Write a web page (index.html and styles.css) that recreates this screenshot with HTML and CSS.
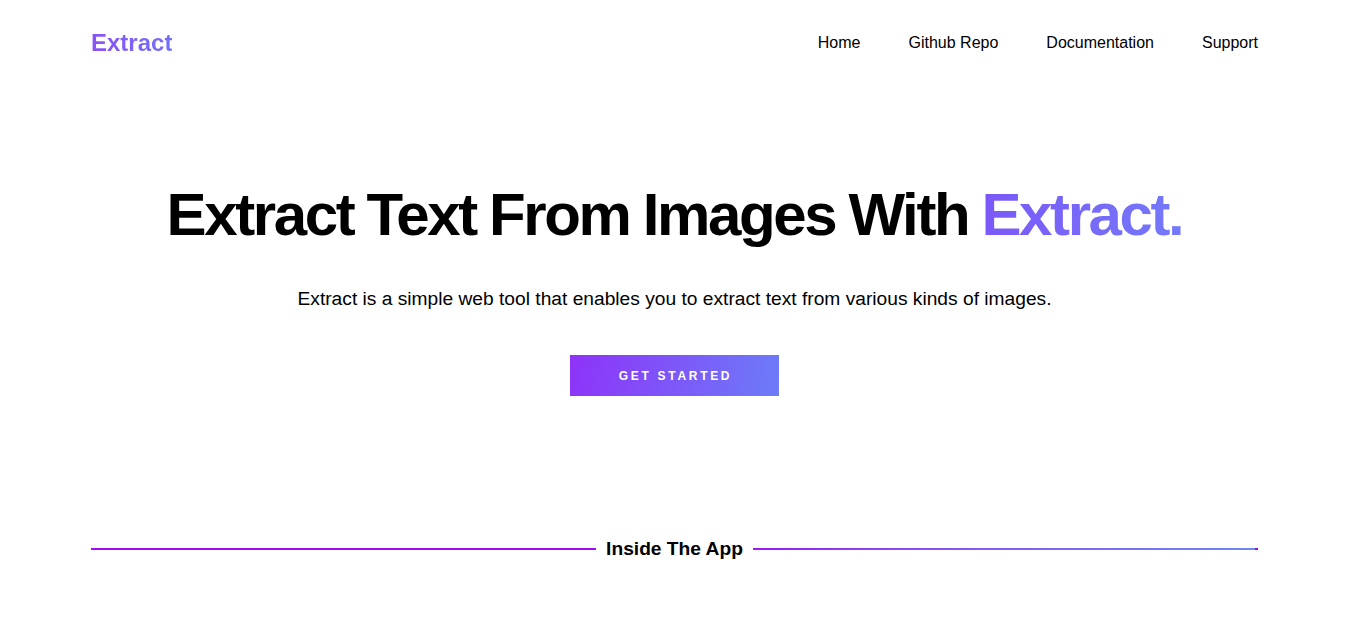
FILE: index.html
```html
<!DOCTYPE html>
<html lang="en">
<head>
<meta charset="utf-8">
<title>Extract</title>
<link rel="stylesheet" href="styles.css">
</head>
<body>
<div class="page">
  <header class="nav">
    <a class="logo" href="#">Extract</a>
    <nav class="links">
      <a href="#">Home</a>
      <a href="#">Github Repo</a>
      <a href="#">Documentation</a>
      <a href="#">Support</a>
    </nav>
  </header>
  <section class="hero">
    <h1 class="title">Extract Text From Images With <span class="grad">Extract.</span></h1>
    <p class="lead">Extract is a simple web tool that enables you to extract text from various kinds of images.</p>
    <a class="cta" href="#">GET STARTED</a>
  </section>
  <div class="divider">
    <span class="line left"></span>
    <h2 class="divider-title">Inside The App</h2>
    <span class="line right"></span>
  </div>
</div>
</body>
</html>
```
FILE: styles.css
```css
* { box-sizing: border-box; }
html, body { margin: 0; padding: 0; background: #fff; }
body { font-family: "Liberation Sans", Arial, sans-serif; color: #000; }
a { text-decoration: none; color: inherit; }

.page { padding: 0 91px; }

.nav {
  height: 86px;
  display: flex;
  align-items: center;
  justify-content: space-between;
}
.logo {
  font-size: 24px;
  font-weight: 700;
  background: linear-gradient(90deg, #8a52f6, #7370f9);
  -webkit-background-clip: text;
  background-clip: text;
  color: transparent;
}
.links { display: flex; gap: 48px; font-size: 16px; }

.hero {
  display: flex;
  flex-direction: column;
  align-items: center;
  padding-top: 94px;
}
.title {
  margin: 0;
  font-size: 60px;
  font-weight: 700;
  letter-spacing: -2.4px;
  word-spacing: -1px;
  line-height: 70px;
}
.grad {
  background: linear-gradient(90deg, #7b58f8, #7479fa);
  -webkit-background-clip: text;
  background-clip: text;
  color: transparent;
}
.lead {
  margin: 37px 0 0;
  font-size: 19.2px;
  line-height: 24px;
}
.cta {
  margin-top: 44px;
  width: 209px;
  height: 41px;
  display: flex;
  align-items: center;
  justify-content: center;
  color: #fff;
  font-size: 12px;
  font-weight: 700;
  letter-spacing: 2.7px;
  padding-left: 2px;
  background: linear-gradient(100deg, #8e33f8, #6c7cf8);
}

.divider {
  margin-top: 141px;
  display: flex;
  align-items: center;
  gap: 10px;
}
.line { flex: 1; height: 2px; }
.line.left { background: #a10cf2; }
.line.right {
  background: linear-gradient(90deg, #9a1af2 0%, #8a4cf4 30%, #6e86f2 99.4%, #b000f0 99.5%);
}
.divider-title {
  margin: 0;
  font-size: 19.2px;
  font-weight: 700;
  line-height: 24px;
}
```
